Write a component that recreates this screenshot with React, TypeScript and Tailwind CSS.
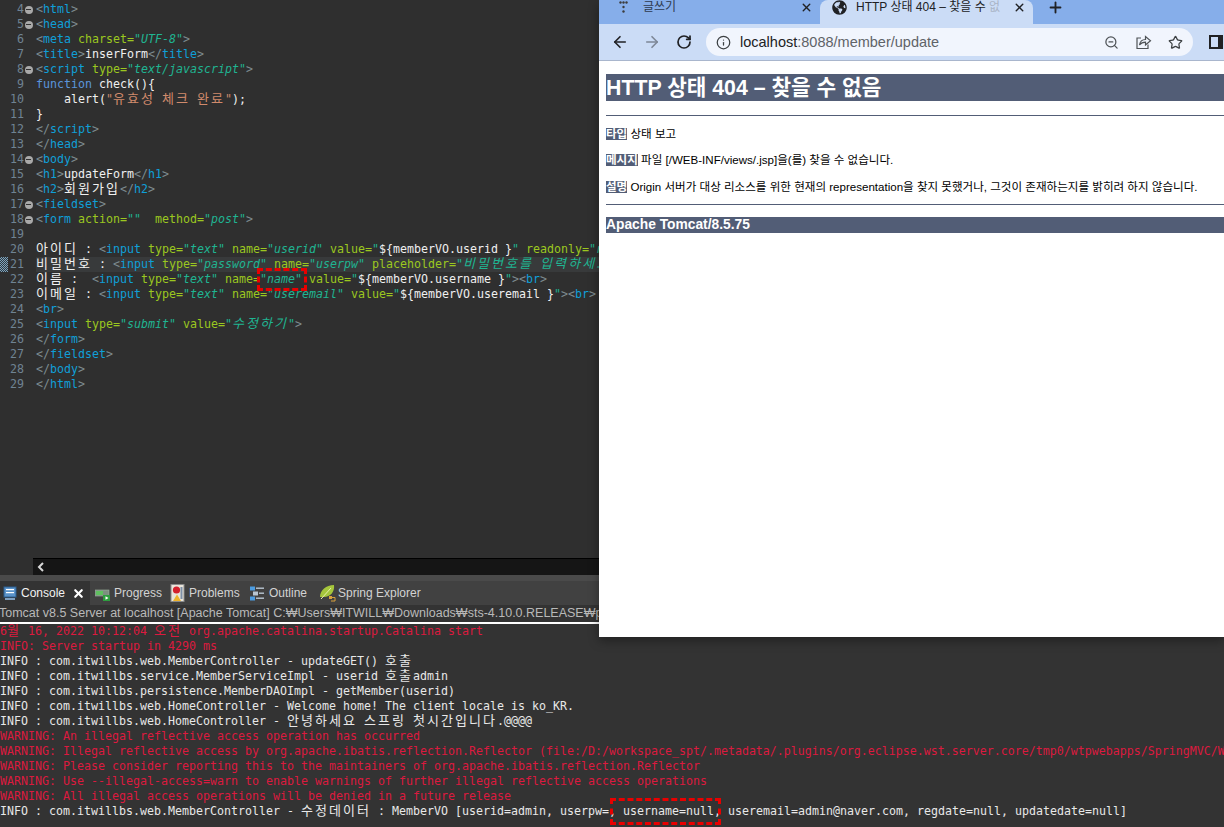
import React from 'react';
import { ArrowLeft, ArrowRight, Info, Plus, RotateCw, Star, X, ZoomOut } from 'lucide-react';
import { FaGlobeAmericas } from 'react-icons/fa';

const P = 'text-[#7d8c8f]';
const T = 'text-[#0f9fd8]';
const A = 'text-[#9bc720]';
const S = 'text-[#1fb592] italic';
const W = 'text-[#f0f0f0]';
const F = 'text-[#5b95dc]';
const K = 'text-[#d08a6c]';

type Tok = [string, string];

// hangul takes two cells of the mono grid, so it gets its own size and tracking
const Txt = ({ text }: { text: string }) => (
  <>
    {text.split(/([가-힣]+)/).map((part, i) =>
      /[가-힣]/.test(part) ? (
        <span key={i} className="font-['Noto_Sans_CJK_KR',sans-serif] text-[13px] leading-[0] tracking-[2.05px]">
          {part}
        </span>
      ) : (
        <span key={i}>{part}</span>
      ),
    )}
  </>
);

const tag = (name: string, close = false): Tok[] => [
  [P, close ? '</' : '<'],
  [T, name],
  [P, '>'],
];

const codeLines: { n: number; fold?: boolean; active?: boolean; toks: Tok[] }[] = [
  { n: 4, fold: true, toks: tag('html') },
  { n: 5, fold: true, toks: tag('head') },
  { n: 6, toks: [[P, '<'], [T, 'meta'], [W, ' '], [A, 'charset='], [S, '"UTF-8"'], [P, '>']] },
  { n: 7, toks: [...tag('title'), [W, 'inserForm'], ...tag('title', true)] },
  { n: 8, fold: true, toks: [[P, '<'], [T, 'script'], [W, ' '], [A, 'type='], [S, '"text/javascript"'], [P, '>']] },
  { n: 9, toks: [[F, 'function'], [W, ' check(){']] },
  { n: 10, toks: [[W, '    alert('], [K, '"유효성 체크 완료"'], [W, ');']] },
  { n: 11, toks: [[W, '}']] },
  { n: 12, toks: tag('script', true) },
  { n: 13, toks: tag('head', true) },
  { n: 14, fold: true, toks: tag('body') },
  { n: 15, toks: [...tag('h1'), [W, 'updateForm'], ...tag('h1', true)] },
  { n: 16, toks: [...tag('h2'), [W, '회원가입'], ...tag('h2', true)] },
  { n: 17, fold: true, toks: tag('fieldset') },
  { n: 18, fold: true, toks: [[P, '<'], [T, 'form'], [W, ' '], [A, 'action='], [S, '""'], [W, '  '], [A, 'method='], [S, '"post"'], [P, '>']] },
  { n: 19, toks: [] },
  {
    n: 20,
    toks: [
      [W, '아이디 : '], [P, '<'], [T, 'input'], [W, ' '], [A, 'type='], [S, '"text"'], [W, ' '], [A, 'name='], [S, '"userid"'], [W, ' '],
      [A, 'value='], [S, '"'], [W, '${memberVO.userid }'], [S, '"'], [W, ' '], [A, 'readonly='], [S, '"readonly"'],
    ],
  },
  {
    n: 21,
    active: true,
    toks: [
      [W, '비밀번호 : '], [P, '<'], [T, 'input'], [W, ' '], [A, 'type='], [S, '"password"'], [W, ' '], [A, 'name='], [S, '"userpw"'], [W, ' '],
      [A, 'placeholder='], [S, '"비밀번호를 입력하세요"'],
    ],
  },
  {
    n: 22,
    toks: [
      [W, '이름 :  '], [P, '<'], [T, 'input'], [W, ' '], [A, 'type='], [S, '"text"'], [W, ' '], [A, 'name='], [S, '"name"'], [W, ' '],
      [A, 'value='], [S, '"'], [W, '${memberVO.username }'], [S, '"'], [P, '>'], ...tag('br'),
    ],
  },
  {
    n: 23,
    toks: [
      [W, '이메일 : '], [P, '<'], [T, 'input'], [W, ' '], [A, 'type='], [S, '"text"'], [W, ' '], [A, 'name='], [S, '"useremail"'], [W, ' '],
      [A, 'value='], [S, '"'], [W, '${memberVO.useremail }'], [S, '"'], [P, '>'], ...tag('br'),
    ],
  },
  { n: 24, toks: tag('br') },
  { n: 25, toks: [[P, '<'], [T, 'input'], [W, ' '], [A, 'type='], [S, '"submit"'], [W, ' '], [A, 'value='], [S, '"수정하기"'], [P, '>']] },
  { n: 26, toks: tag('form', true) },
  { n: 27, toks: tag('fieldset', true) },
  { n: 28, toks: tag('body', true) },
  { n: 29, toks: tag('html', true) },
];

const R = 'text-[#dc1a3f]';
const I = 'text-[#e8e8e8]';

const consoleLines: [string, string][] = [
  [R, '6월 16, 2022 10:12:04 오전 org.apache.catalina.startup.Catalina start'],
  [R, 'INFO: Server startup in 4290 ms'],
  [I, 'INFO : com.itwillbs.web.MemberController - updateGET() 호출'],
  [I, 'INFO : com.itwillbs.service.MemberServiceImpl - userid 호출admin'],
  [I, 'INFO : com.itwillbs.persistence.MemberDAOImpl - getMember(userid)'],
  [I, 'INFO : com.itwillbs.web.HomeController - Welcome home! The client locale is ko_KR.'],
  [I, 'INFO : com.itwillbs.web.HomeController - 안녕하세요 스프링 첫시간입니다.@@@@'],
  [R, 'WARNING: An illegal reflective access operation has occurred'],
  [R, 'WARNING: Illegal reflective access by org.apache.ibatis.reflection.Reflector (file:/D:/workspace_spt/.metadata/.plugins/org.eclipse.wst.server.core/tmp0/wtpwebapps/SpringMVC/W'],
  [R, 'WARNING: Please consider reporting this to the maintainers of org.apache.ibatis.reflection.Reflector'],
  [R, 'WARNING: Use --illegal-access=warn to enable warnings of further illegal reflective access operations'],
  [R, 'WARNING: All illegal access operations will be denied in a future release'],
  [I, 'INFO : com.itwillbs.web.MemberController - 수정데이터 : MemberVO [userid=admin, userpw=, username=null, useremail=admin@naver.com, regdate=null, updatedate=null]'],
];

const mono = "font-['DejaVu_Sans_Mono',monospace] text-[11.63px] leading-[15px] whitespace-pre";

const Editor = () => (
  <div className="h-[558px] bg-[#2f2f2f] pt-[2px] overflow-hidden shrink-0">
    {codeLines.map((line) => (
      <div key={line.n} className={`flex h-[15px] ${mono}`}>
        <div className="relative w-[36px] shrink-0 flex items-center">
          {line.active && (
            <span className="absolute left-0 top-0 w-[8px] h-full bg-[repeating-conic-gradient(#7fa3bb_0_25%,#2f3a42_0_50%)] bg-[length:2px_2px]" />
          )}
          <span className="relative w-[24px] text-right text-[#6f8393]">{line.n}</span>
          {line.fold && <span className="ml-[0.5px] w-[8px] h-[8px] rounded-full bg-[#a9a9a9] flex items-center justify-center"><span className="w-[5px] h-px bg-[#333]" /></span>}
        </div>
        <div className={`flex-1 ${line.active ? 'bg-[#383a3b]' : ''}`}>
          {line.toks.map(([c, text], i) => (
            <span key={i} className={c}>
              <Txt text={text} />
            </span>
          ))}
        </div>
      </div>
    ))}
  </div>
);

const ConsoleIcon = () => (
  <svg width="14" height="15" viewBox="0 0 14 15">
    <rect x="1" y="1" width="12" height="10" fill="#5b93c9" stroke="#2d5f90" />
    <rect x="3" y="3" width="8" height="1.2" fill="#fff" />
    <rect x="3" y="6" width="8" height="1.2" fill="#fff" />
    <rect x="2" y="12" width="10" height="2" fill="#7f9fbf" />
  </svg>
);

const ProgressIcon = () => (
  <svg width="16" height="15" viewBox="0 0 16 15">
    <rect x="0" y="4" width="14" height="6" fill="#7d8f80" stroke="#9fb5a0" strokeWidth="0.6" />
    <rect x="1" y="5" width="7" height="4" fill="#5fbf5f" />
    <rect x="8" y="9" width="7" height="6" fill="#2e9e3f" />
    <path d="M10.5 10.2 L13.5 12 L10.5 13.8 Z" fill="#fff" />
  </svg>
);

const ProblemsIcon = () => (
  <svg width="15" height="18" viewBox="0 0 15 18">
    <rect x="1" y="0.5" width="13" height="17" fill="#e9e4da" stroke="#8a8a8a" />
    <circle cx="6.5" cy="6" r="3.6" fill="#d4202c" />
    <path d="M7 10.5 L11 17 L3 17 Z" fill="#eeb32c" />
    <rect x="10.5" y="3" width="2" height="12" fill="#7d8fa8" />
  </svg>
);

const OutlineIcon = () => (
  <svg width="14" height="15" viewBox="0 0 14 15">
    <rect x="0" y="0.5" width="5" height="4" fill="#4d9ce0" />
    <rect x="6" y="1.5" width="8" height="1.4" fill="#b9c6d2" />
    <rect x="3" y="5.5" width="5" height="4" fill="#b9c6d2" />
    <rect x="9" y="6.5" width="5" height="1.4" fill="#b9c6d2" />
    <rect x="0" y="10.5" width="5" height="4" fill="#4d9ce0" />
    <rect x="6" y="11.5" width="8" height="1.4" fill="#b9c6d2" />
  </svg>
);

const SpringIcon = () => (
  <svg width="17" height="18" viewBox="0 0 17 18">
    <path d="M1 13 C1 6 7 1 15 1 C16 8 11 13 5 13 Z" fill="#a5c63c" />
    <path d="M2 15 L12 4" stroke="#e8f0b0" strokeWidth="1" />
    <rect x="10" y="12" width="3" height="3" fill="#d9a13c" />
    <path d="M13 13.5 H16 V17 H12" fill="none" stroke="#d9a13c" />
  </svg>
);

// chrome's share button: open box with a curved arrow leaving to the right
const ShareIcon = () => (
  <svg width="17" height="16" viewBox="0 0 17 16" fill="none" stroke="#4f5357" strokeWidth="1.2" className="ml-[16px] shrink-0">
    <path d="M6 4 H2 V14.5 H13 V10.5" />
    <path d="M4.5 11 C5 7.5 7.5 5.5 10.5 5.5 V2.5 L15.5 6.8 L10.5 11 V8.2 C8.5 8.2 6 9 4.5 11 Z" />
  </svg>
);

const viewTabs = [
  { label: 'Progress', width: 'w-[75px]', icon: <ProgressIcon /> },
  { label: 'Problems', width: 'w-[80px]', icon: <ProblemsIcon /> },
  { label: 'Outline', width: 'w-[69px]', icon: <OutlineIcon /> },
  { label: 'Spring Explorer', width: 'w-[110px]', icon: <SpringIcon /> },
];

const Bottom = () => (
  <div className="flex-1 flex flex-col min-h-0 bg-[#333333]">
    <div className="h-[17px] shrink-0 bg-[#2f2f2f] pl-[33px]">
      <div className="h-full bg-[#151515] border-t border-[#000] flex items-center pl-[4px]">
        <svg width="8" height="10" viewBox="0 0 8 10">
          <path d="M6 1 L2 5 L6 9" fill="none" stroke="#d8d8d8" strokeWidth="2" />
        </svg>
      </div>
    </div>
    <div className="h-[6px] shrink-0 bg-[#4a4a4a]" />
    <div className="h-[24px] shrink-0 bg-[#414141] flex items-stretch font-['Liberation_Sans',sans-serif] text-[12px]">
      <div className="w-[90px] mr-[5px] bg-[#333333] flex items-center pl-[3px] text-[#f2f2f2]">
        <ConsoleIcon />
        <span className="ml-[4px]">Console</span>
        <X size={13} strokeWidth={4} className="ml-[7px] text-white" />
      </div>
      {viewTabs.map((tab) => (
        <div key={tab.label} className={`${tab.width} shrink-0 flex items-center text-[#d3d3d3]`}>
          <span className="w-[19px] shrink-0 flex items-center">{tab.icon}</span>
          <span className="whitespace-nowrap">{tab.label}</span>
        </div>
      ))}
    </div>
    <div className="h-[17px] shrink-0 overflow-hidden whitespace-pre -ml-px font-['Liberation_Sans',sans-serif] text-[12.5px] leading-[17px] text-[#b9b9b9] border-b-2 border-white box-content">
      Tomcat v8.5 Server at localhost [Apache Tomcat] C:₩Users₩ITWILL₩Downloads₩sts-4.10.0.RELEASE₩plugins₩org.eclipse.justj.openjdk.hotspot.jre.full.win32
    </div>
    <div>
      {consoleLines.map(([c, text], i) => (
        <div key={i} className={`h-[15px] ${mono} ${c}`}>
          <Txt text={text} />
        </div>
      ))}
    </div>
  </div>
);

const Browser = () => (
  <div className="absolute left-[599px] top-0 w-[625px] h-[637px] bg-white flex flex-col shadow-[0_4px_10px_rgba(0,0,0,0.35)] overflow-hidden font-['Liberation_Sans','Noto_Sans_CJK_KR',sans-serif]">
    <div className="h-[24px] shrink-0 bg-[#86aeea] flex items-stretch text-[12px] text-[#202124]">
      <div className="w-[221px] flex items-center pb-[10px] pl-[20px] pr-[7px]">
        <svg width="9" height="13" viewBox="0 0 9 13" className="shrink-0">
          <circle cx="1.5" cy="1.5" r="1.2" fill="#3c3c3c" />
          <circle cx="4.5" cy="1.5" r="1.2" fill="#3c3c3c" />
          <circle cx="7.5" cy="1.5" r="1.2" fill="#3c3c3c" />
          <circle cx="4.5" cy="6" r="1.2" fill="#3c3c3c" />
          <circle cx="4.5" cy="10.5" r="1.2" fill="#3c3c3c" />
        </svg>
        <span className="ml-[15px] flex-1 text-[#2e3a4e]">글쓰기</span>
        <X size={13} strokeWidth={2.6} />
      </div>
      <div className="w-[213px] bg-[#cbdcf6] rounded-t-[8px] flex items-center pb-[10px] pl-[12px] pr-[7px]">
        <FaGlobeAmericas size={15} className="shrink-0 text-[#202124]" />
        <span className="ml-[9px] flex-1 overflow-hidden whitespace-nowrap">
          HTTP 상태 404 – 찾을 수 <span className="text-[#a9b4c6]">없</span>
        </span>
        <X size={13} strokeWidth={2.6} className="ml-[6px] shrink-0" />
      </div>
      <div className="flex items-center pb-[10px] pl-[14px]">
        <Plus size={17} strokeWidth={2.6} />
      </div>
    </div>
    <div className="h-[37px] shrink-0 bg-[#cbdcf6] border-b border-[#a9b6cd] flex items-center pl-[12px]">
      <ArrowLeft size={18} strokeWidth={2.2} className="text-[#202124]" />
      <ArrowRight size={18} strokeWidth={2.2} className="ml-[14px] text-[#7d8796]" />
      <RotateCw size={16} strokeWidth={2.6} className="ml-[15px] text-[#202124]" />
      <div className="ml-[14px] w-[487px] h-[28px] rounded-full bg-[#f1f5fd] flex items-center pl-[10px] pr-[10px]">
        <Info size={15} className="text-[#3c4043]" />
        <span className="ml-[9px] pt-px flex-1 text-[14.5px] text-[#5f6368]">
          <span className="text-[#202124]">localhost</span>:8088/member/update
        </span>
        <ZoomOut size={15} className="text-[#4f5357]" />
        <ShareIcon />
        <Star size={15} strokeWidth={2} className="ml-[16px] text-[#3c4043]" />
      </div>
      <div className="ml-[16px] w-[14px] h-[14px] border-2 border-[#202124] border-r-[5px]" />
    </div>
    <div className="pl-[7px] pt-[13px] text-[#000]">
      <h1 className="h-[27px] bg-[#525d76] text-white font-bold text-[21.3px] leading-[29px] whitespace-nowrap">HTTP 상태 404 – 찾을 수 없음</h1>
      <hr className="mt-[14px] border-t border-[#525d76]" />
      <p className="mt-[11px] h-[14px] text-[11.55px] leading-[14px] whitespace-nowrap">
        <b className="bg-[#525d76] text-white font-bold">타입</b> 상태 보고
      </p>
      <p className="mt-[12px] h-[14px] text-[11.55px] leading-[14px] whitespace-nowrap">
        <b className="bg-[#525d76] text-white font-bold">메시지</b> 파일 [/WEB-INF/views/.jsp]을(를) 찾을 수 없습니다.
      </p>
      <p className="mt-[13px] h-[14px] text-[11.55px] leading-[14px] whitespace-nowrap">
        <b className="bg-[#525d76] text-white font-bold">설명</b> Origin 서버가 대상 리소스를 위한 현재의 representation을 찾지 못했거나, 그것이 존재하는지를 밝히려 하지 않습니다.
      </p>
      <hr className="mt-[10px] border-t border-[#525d76]" />
      <h3 className="mt-[12px] h-[16px] bg-[#525d76] text-white font-bold text-[13.8px] leading-[16px]">Apache Tomcat/8.5.75</h3>
    </div>
  </div>
);

const App: React.FC = () => {
  return (
    <div className="relative w-[1224px] h-[827px] overflow-hidden flex flex-col bg-[#333333]">
      <Editor />
      <Bottom />
      <Browser />
      {/* hand drawn red marks on the capture */}
      <div className="absolute left-[257px] top-[268px] w-[50px] h-[23px] border-[3px] border-dashed border-[#e80000]" />
      <div className="absolute left-[610px] top-[798px] w-[111px] h-[27px] border-[3px] border-dashed border-[#e80000]" />
    </div>
  );
};

export default App;
